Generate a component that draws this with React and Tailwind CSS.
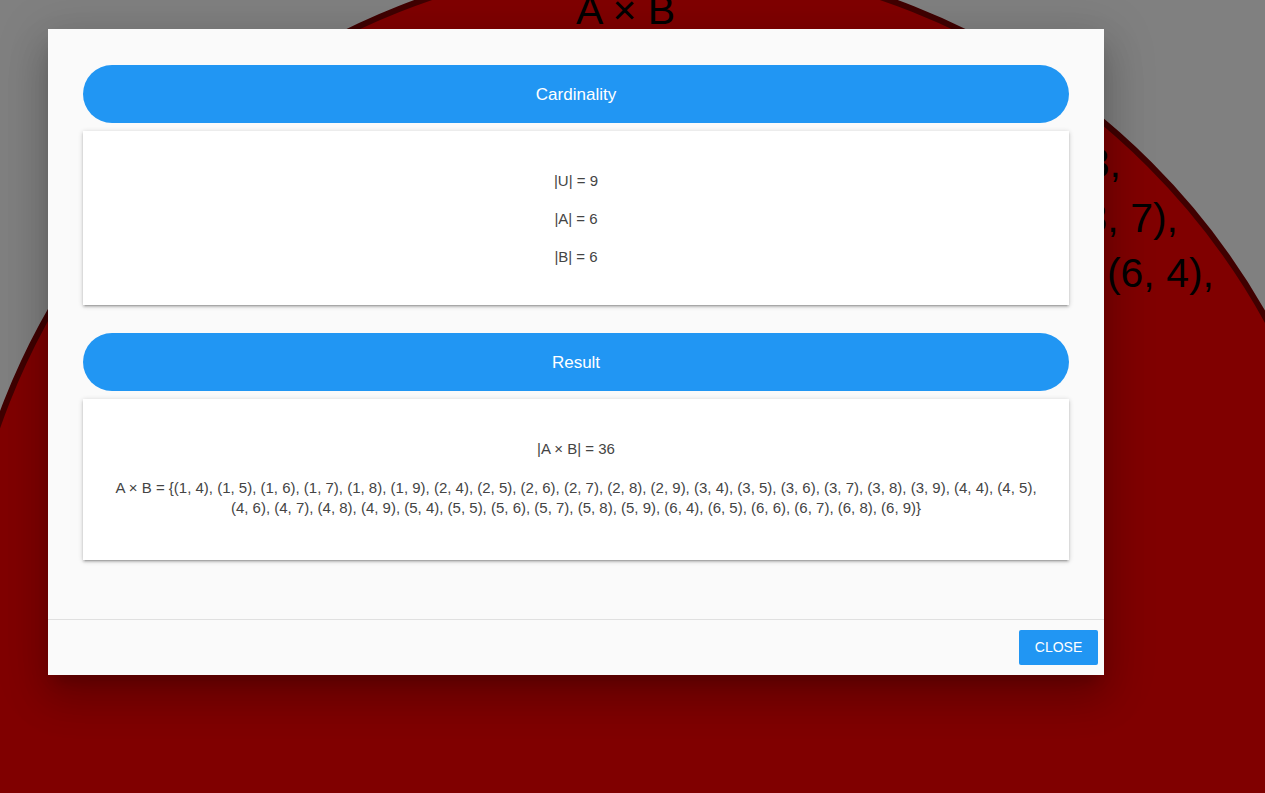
import React from "react";

const pairs = [];
for (const a of [1, 2, 3, 4, 5, 6]) {
  for (const b of [4, 5, 6, 7, 8, 9]) pairs.push(`(${a}, ${b})`);
}
const product = `A × B = {${pairs.join(", ")}}`;

function Section({ title, children, className = "" }) {
  return (
    <div className={className}>
      <div className="h-[58px] pt-[2px] rounded-full bg-[#2196f3] flex items-center justify-center text-white text-[17px]">
        {title}
      </div>
      <div className="mt-2 bg-white shadow-[0_2px_2px_0_rgba(0,0,0,0.14),0_3px_1px_-2px_rgba(0,0,0,0.12),0_1px_5px_0_rgba(0,0,0,0.2)] px-6 text-center text-[15px] text-[#444]">
        {children}
      </div>
    </div>
  );
}

export default function App() {
  return (
    <div
      className="relative h-[793px] w-full overflow-hidden bg-[#808080]"
      style={{ fontFamily: '"Liberation Sans", Arial, sans-serif' }}
    >
      {/* background diagram, dimmed */}
      <div className="absolute left-[-45px] top-[-43px] w-[1402px] h-[1402px] rounded-full bg-[#800000] border-[6px] border-[#400000]" />
      <div className="absolute left-[576px] top-[-10px] text-[41px] leading-none text-black">A × B</div>
      <div className="absolute right-[144px] top-[143px] text-[41px] leading-none text-black whitespace-nowrap">U = {"{"}1, 2, 3,</div>
      <div className="absolute right-[87px] top-[198px] text-[41px] leading-none text-black whitespace-nowrap">(3, 6), (3, 7),</div>
      <div className="absolute right-[51px] top-[253px] text-[41px] leading-none text-black whitespace-nowrap">(5, 9), (6, 4),</div>

      {/* dialog */}
      <div className="absolute inset-0 pl-[48px] pt-[29px]">
        <div className="w-[1056px] bg-[#fafafa] shadow-[0_11px_15px_-7px_rgba(0,0,0,0.2),0_24px_38px_3px_rgba(0,0,0,0.14),0_9px_46px_8px_rgba(0,0,0,0.12)]">
          <div className="px-[35px] pt-[36px] pb-[59px]">
            <Section title="Cardinality">
              <div className="pt-[39px] pb-[38px] flex flex-col gap-[17px] leading-[21px]">
                <p>|U| = 9</p>
                <p>|A| = 6</p>
                <p>|B| = 6</p>
              </div>
            </Section>
            <Section title="Result" className="mt-[28px]">
              <div className="pt-[40px] pb-[42px] leading-[20px]">
                <p>|A × B| = 36</p>
                <p className="mt-[19px]">{product}</p>
              </div>
            </Section>
          </div>
          <div className="border-t border-[#e0e0e0] h-[56px] flex items-center justify-end pr-[6px]">
            <button className="w-[79px] h-[35px] rounded-[2px] bg-[#2196f3] text-white text-[14px]">
              CLOSE
            </button>
          </div>
        </div>
      </div>
    </div>
  );
}
